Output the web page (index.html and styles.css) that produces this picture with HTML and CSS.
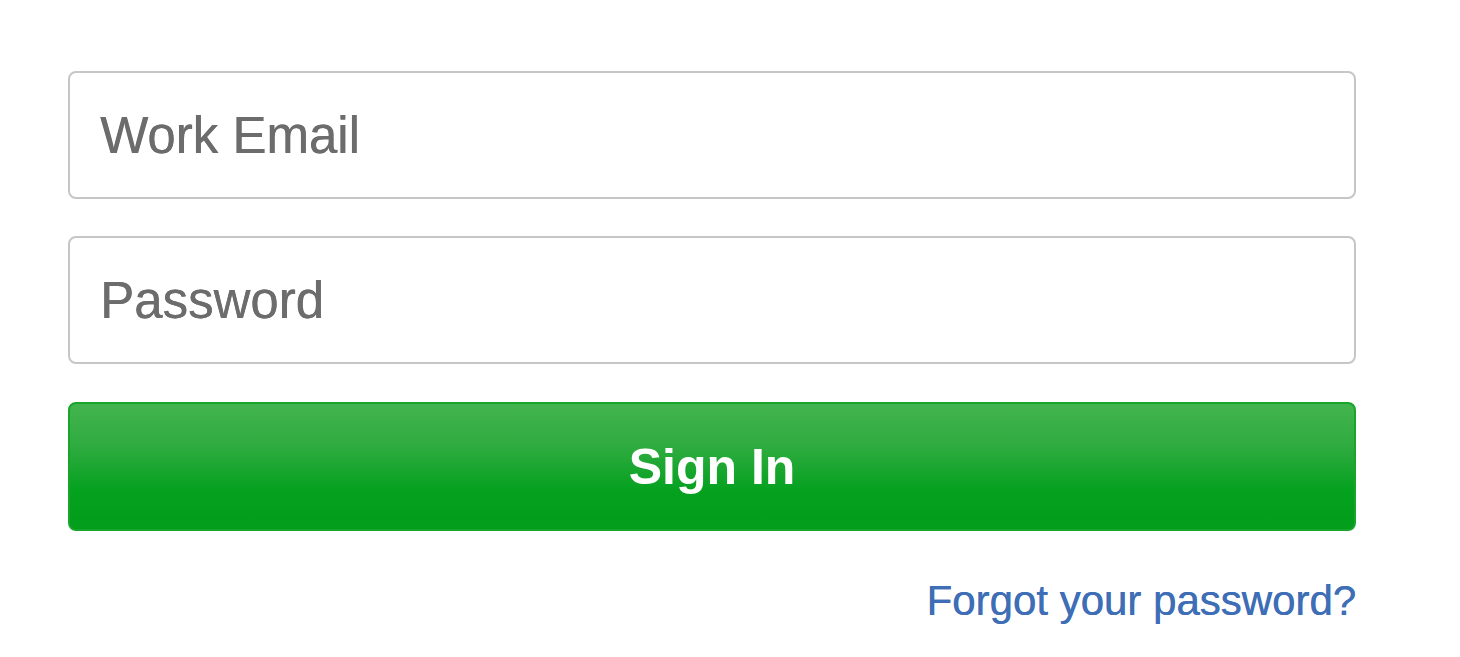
FILE: index.html
```html
<!DOCTYPE html>
<html>
<head>
<meta charset="utf-8">
<link rel="stylesheet" href="styles.css">
</head>
<body>
<form class="login">
  <input class="field" type="email" placeholder="Work Email">
  <input class="field" type="password" placeholder="Password">
  <button class="submit" type="button">Sign In</button>
  <div class="links"><a class="forgot" href="#">Forgot your password?</a></div>
</form>
</body>
</html>
```
FILE: styles.css
```css
html, body {
  margin: 0;
  padding: 0;
  background: #ffffff;
}
body {
  font-family: "Liberation Sans", Arial, sans-serif;
}
.login {
  display: flex;
  flex-direction: column;
  width: 1288px;
  margin: 71px 0 0 68px;
}
.field {
  box-sizing: border-box;
  height: 128px;
  width: 100%;
  margin: 0 0 37px 0;
  padding: 0 0 0 30px;
  border: 2px solid #c6c6c6;
  border-radius: 8px;
  background: #ffffff;
  font-family: "Liberation Sans", Arial, sans-serif;
  font-size: 51px;
  color: #555;
  outline: none;
}
.field::placeholder {
  color: #6c6c6c;
  opacity: 1;
  text-shadow: 0.4px 0 0 #6c6c6c;
}
.field + .field {
  margin-bottom: 38px;
}
.submit {
  box-sizing: border-box;
  height: 129px;
  width: 100%;
  border: 2px solid #17a52a;
  border-radius: 8px;
  background: linear-gradient(to bottom, #43b44f 0%, #2eab3f 35%, #04a11f 70%, #029d1a 100%);
  color: #ffffff;
  font-family: "Liberation Sans", Arial, sans-serif;
  font-weight: bold;
  font-size: 50px;
  padding: 0;
  cursor: pointer;
}
.links {
  display: flex;
  justify-content: flex-end;
  margin-top: 46px;
}
.forgot {
  font-size: 42px;
  line-height: 48px;
  color: #3e6eb6;
  text-decoration: none;
  text-shadow: 0.4px 0 0 #3e6eb6;
}
```
